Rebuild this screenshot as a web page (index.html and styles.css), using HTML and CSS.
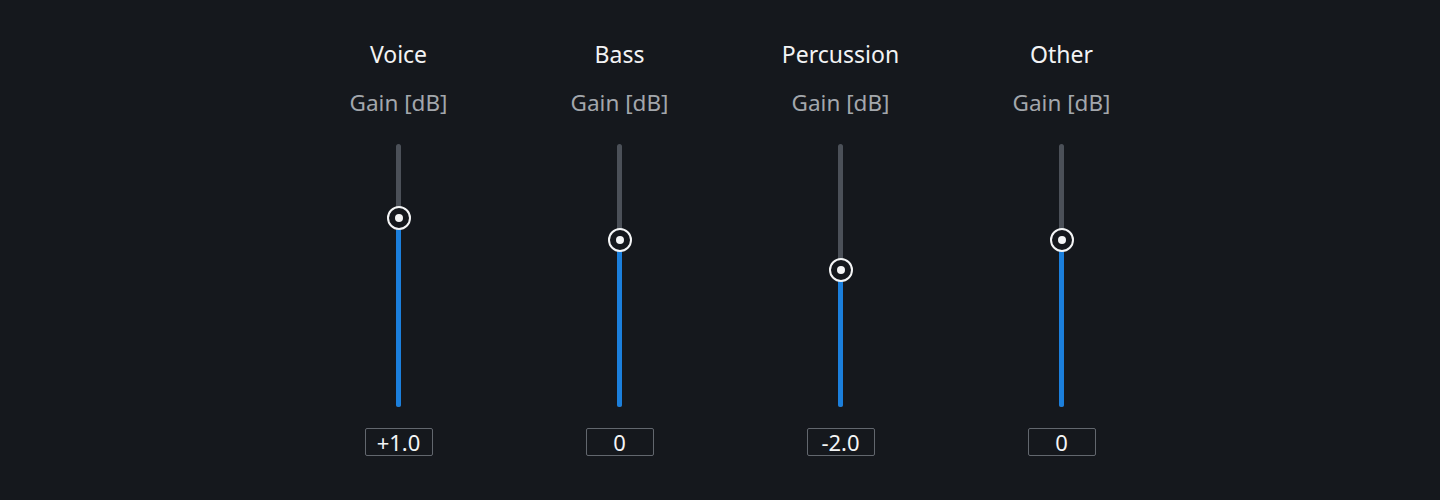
FILE: index.html
```html
<!DOCTYPE html>
<html>
<head>
<meta charset="utf-8">
<link rel="stylesheet" href="styles.css">
</head>
<body>
<div class="mixer">
  <div class="channel">
    <div class="title">Voice</div>
    <div class="unit">Gain [dB]</div>
    <div class="slider">
      <div class="track"></div>
      <div class="fill" style="height: 189px"></div>
      <div class="knob" style="top: 62px"></div>
    </div>
    <div class="value">+1.0</div>
  </div>
  <div class="channel">
    <div class="title">Bass</div>
    <div class="unit">Gain [dB]</div>
    <div class="slider">
      <div class="track"></div>
      <div class="fill" style="height: 167px"></div>
      <div class="knob" style="top: 84px"></div>
    </div>
    <div class="value">0</div>
  </div>
  <div class="channel">
    <div class="title">Percussion</div>
    <div class="unit">Gain [dB]</div>
    <div class="slider">
      <div class="track"></div>
      <div class="fill" style="height: 137px"></div>
      <div class="knob" style="top: 114px"></div>
    </div>
    <div class="value">-2.0</div>
  </div>
  <div class="channel">
    <div class="title">Other</div>
    <div class="unit">Gain [dB]</div>
    <div class="slider">
      <div class="track"></div>
      <div class="fill" style="height: 167px"></div>
      <div class="knob" style="top: 84px"></div>
    </div>
    <div class="value">0</div>
  </div>
</div>
</body>
</html>
```
FILE: styles.css
```css
html, body {
  margin: 0;
  padding: 0;
  background: #15181d;
  height: 500px;
  overflow: hidden;
}
body {
  font-family: "Noto Sans", "Open Sans", sans-serif;
}
.mixer {
  display: flex;
  justify-content: center;
  padding-left: 20px;
  padding-top: 40px;
}
.channel {
  width: 221px;
  display: flex;
  flex-direction: column;
  align-items: center;
}
.title {
  color: #f2f3f4;
  font-size: 23px;
  line-height: 28px;
  height: 28px;
  font-weight: 400;
}
.unit {
  color: #a3a7ac;
  font-size: 22.5px;
  line-height: 28px;
  margin-top: 21px;
}
.slider {
  position: relative;
  width: 30px;
  height: 263px;
  margin-top: 27px;
}
.track {
  position: absolute;
  left: 12.5px;
  top: 0;
  width: 5px;
  height: 100%;
  border-radius: 3px;
  background: #4b5058;
}
.fill {
  position: absolute;
  left: 12.5px;
  bottom: 0;
  width: 5px;
  border-radius: 3px;
  background: #1b7fdc;
}
.knob {
  position: absolute;
  left: 3px;
  width: 20px;
  height: 20px;
  border: 2px solid #f4f5f6;
  border-radius: 50%;
  background: #15181d;
}
.knob::after {
  content: "";
  position: absolute;
  left: 6px;
  top: 6px;
  width: 8px;
  height: 8px;
  border-radius: 50%;
  background: #f4f5f6;
}
.value {
  margin-top: 21px;
  width: 66px;
  height: 26px;
  border: 1px solid #62676e;
  border-radius: 2px;
  color: #f4f5f6;
  font-size: 22px;
  line-height: 26px;
  text-align: center;
}
```
